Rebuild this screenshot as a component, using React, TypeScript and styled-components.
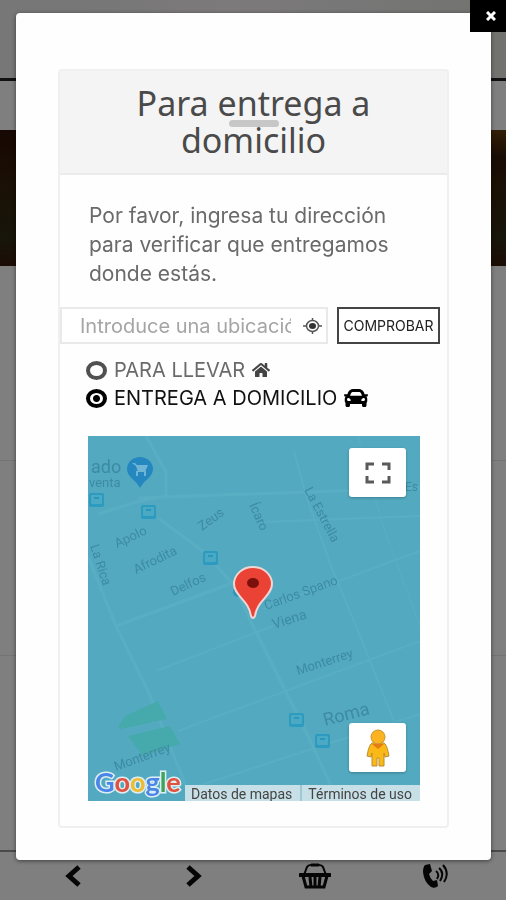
import React, { useState } from "react";
import styled, { createGlobalStyle } from "styled-components";
import { FaHome, FaCar } from "react-icons/fa";

const GlobalStyle = createGlobalStyle`
  *, *::before, *::after { box-sizing: border-box; }
  body { margin: 0; background: #7f7f7f; font-family: Inter, "Liberation Sans", sans-serif; }
  button, input { font-family: inherit; }
`;

const Page = styled.div`
  display: flex;
  flex-direction: column;
  min-height: 100vh;
`;

const PageHeader = styled.header`
  height: 81px;
  border-bottom: 3px solid #111;
  background: linear-gradient(90deg, #777 0 18%, #7d7a7b 45%, #777 70%, #72736f);
`;

const Hero = styled.div`
  height: 136px;
  margin-top: 49px;
  background:
    linear-gradient(180deg, rgba(62, 42, 8, 0.7), transparent 20%) right / 15px 100% no-repeat,
    linear-gradient(180deg, #170803, #1b1004 40%, #17150a 80%, #1c0d05);
`;

const PageSection = styled.section`
  height: 195px;
  border-bottom: 1px solid #747474;
`;

const BottomNav = styled.nav`
  position: fixed;
  inset: auto 0 0 0;
  display: grid;
  grid-template-columns: 3fr 2fr 3fr 2fr;
  height: 50px;
  padding-right: 22px;
  border-top: 2px solid #4a4a4a;
  background: #7f7f7f;
`;

const NavButton = styled.button`
  display: flex;
  align-items: center;
  justify-content: center;
  padding: 0;
  border: 0;
  background: none;
  color: #060606;
`;

const Overlay = styled.div`
  position: fixed;
  inset: 0;
  padding: 13px 15px 40px 16px;
`;

const Dialog = styled.div`
  height: 100%;
  padding: 56px 42px 0;
  border-radius: 4px;
  background: #fefefe;
  box-shadow: 0 1px 4px rgba(0, 0, 0, 0.5);
`;

const CloseButton = styled.button`
  position: absolute;
  top: 0;
  right: 0;
  display: flex;
  align-items: center;
  justify-content: center;
  width: 36px;
  height: 32px;
  padding: 0 0 0 6px;
  border: 0;
  background: #000;
  color: #fff;
`;

const Card = styled.section`
  padding-bottom: 25px;
  border: 2px solid #f0f0f0;
  border-radius: 4px;
`;

const CardHeader = styled.header`
  position: relative;
  padding: 14px 60px;
  border-bottom: 2px solid #ebebeb;
  background: #f4f4f4;
`;

const Title = styled.h1`
  margin: 0;
  color: #4a4a4a;
  font: 400 34px/37px "Noto Sans", sans-serif;
  text-align: center;
`;

const TitleRule = styled.span`
  position: absolute;
  top: 49px;
  left: calc(50% - 25px);
  width: 50px;
  height: 7px;
  border-radius: 4px;
  background: rgba(180, 180, 180, 0.7);
`;

const Intro = styled.p`
  margin: 0;
  padding: 26px 28px 19px 29px;
  color: #6a6a6a;
  font-size: 21px;
  line-height: 29px;
`;

const SearchForm = styled.form`
  display: flex;
  align-items: center;
  gap: 9px;
  padding-right: 7px;
`;

const AddressField = styled.label`
  display: flex;
  flex: 1;
  align-items: center;
  gap: 12px;
  min-width: 0;
  height: 37px;
  padding: 0 4px 0 18px;
  border: 2px solid #e9e9e9;
  background: #fff;
  color: #555;
`;

const AddressInput = styled.input`
  flex: 1;
  min-width: 0;
  padding: 0;
  border: 0;
  outline: 0;
  background: none;
  color: #444;
  font-size: 20px;
  &::placeholder { color: #a5a5a5; opacity: 1; }
`;

const CheckButton = styled.button`
  width: 103px;
  height: 37px;
  padding: 0;
  border: 2px solid #444;
  background: #fff;
  color: #222;
  font-size: 14px;
`;

const Options = styled.fieldset`
  margin: 0;
  padding: 12px 26px 24px;
  border: 0;
`;

const Option = styled.label<{ $active: boolean }>`
  display: flex;
  align-items: center;
  gap: 7px;
  height: 28px;
  color: ${(p) => (p.$active ? "#111" : "#6a6a6a")};
  font-size: 20px;
  line-height: 28px;
  svg { flex: none; color: ${(p) => (p.$active ? "#000" : "#444")}; }
`;

const Radio = styled.input`
  appearance: none;
  flex: none;
  width: 21px;
  height: 19px;
  margin: 0;
  border: 4px solid #505050;
  border-radius: 50%;
  &:checked {
    border-color: #000;
    background: radial-gradient(circle, #000 0 3px, #fff 4px);
  }
`;

const MapFrame = styled.div`
  position: relative;
  height: 365px;
  margin: 0 27px 0 28px;
  overflow: hidden;
  background: #53aac0;
`;

const MapCanvas = styled.svg`
  display: block;
  width: 100%;
  height: 100%;
`;

const MapButton = styled.button<{ $edge: "top" | "bottom" }>`
  position: absolute;
  right: 14px;
  ${(p) => (p.$edge === "top" ? "top: 12px;" : "bottom: 29px;")}
  display: flex;
  align-items: center;
  justify-content: center;
  width: 57px;
  height: 49px;
  padding: 0;
  border: 0;
  border-radius: 3px;
  background: #fff;
  box-shadow: 0 1px 3px rgba(0, 0, 0, 0.25);
`;

const MapCredits = styled.div`
  position: absolute;
  right: 0;
  bottom: 0;
  display: flex;
  height: 16px;
  background: #c7dfe6;
  font: 400 14px/18px Roboto, sans-serif;
`;

const CreditLink = styled.a`
  padding: 0 8px 0 6px;
  color: #444;
  text-decoration: none;
  white-space: nowrap;
  & + & { border-left: 2px solid #a0c8d4; }
`;

const streetLabels = [
  { text: "ado", x: 3, y: 37, angle: 0, size: 18 },
  { text: "venta", x: 1, y: 51, angle: 0, size: 13 },
  { text: "Apolo", x: 29, y: 112, angle: -25, size: 13 },
  { text: "Zeus", x: 114, y: 95, angle: -36, size: 13 },
  { text: "Afrodita", x: 48, y: 138, angle: -26, size: 13 },
  { text: "Delfos", x: 85, y: 160, angle: -25, size: 13 },
  { text: "Ícaro", x: 161, y: 69, angle: 66, size: 13 },
  { text: "La Rica", x: 2, y: 110, angle: 72, size: 13 },
  { text: "La Estrella", x: 216, y: 54, angle: 62, size: 13 },
  { text: "Carlos Spano", x: 178, y: 174, angle: -20, size: 13 },
  { text: "Viena", x: 186, y: 193, angle: -18, size: 14 },
  { text: "Monterrey", x: 210, y: 239, angle: -18, size: 13 },
  { text: "Monterrey", x: 28, y: 335, angle: -20, size: 13 },
  { text: "Roma", x: 237, y: 290, angle: -15, size: 18 },
  { text: "Es", x: 317, y: 55, angle: 0, size: 12 },
];

const transitStops = [[1, 57], [53, 69], [115, 115], [201, 277], [227, 298]];

function DeliveryMap() {
  return (
    <MapCanvas viewBox="0 0 332 365" preserveAspectRatio="xMidYMid slice" role="img" aria-label="Mapa">
      <g fill="none" stroke="#59aec3" strokeWidth="3">
        <path d="M58 0 L78 36 L78 60 M50 62 L332 52 M78 60 L48 66 L10 78 M70 82 L115 115 L146 149 L165 190 L220 300 L250 365" />
        <path d="M28 190 L150 145 M0 120 L28 190 L60 255 L82 310 L104 365" />
        <path d="M206 15 L218 60 L243 130 L268 190 L300 270 L320 320" strokeWidth="2" />
        <path d="M175 86 L332 80 M175 173 L332 115 M68 235 L185 190 M90 295 L332 205 M110 350 L332 278" strokeWidth="2" />
        <path d="M270 0 L295 90 L332 190" strokeWidth="1" />
      </g>
      <g fill="#46a9ac">
        <path d="M30 291 L37 280 L70 265 L79 283 L33 293 Z" />
        <path d="M40 300 L82 290 L92 308 L55 320 Z" />
      </g>
      <circle cx="150" cy="156" r="5" fill="#2797bd" />
      {transitStops.map(([x, y]) => (
        <g key={`${x}-${y}`}>
          <rect x={x} y={y} width="15" height="14" rx="2" fill="#2d9abf" />
          <rect x={x + 2} y={y + 2} width="11" height="9" rx="1" fill="#4ca9c3" />
          <path d={`M${x + 5} ${y + 5}h5`} stroke="#2797bd" strokeWidth="2" />
        </g>
      ))}
      <g fill="#3d8ba2" fontFamily="Roboto, sans-serif">
        {streetLabels.map((l) => (
          <text key={`${l.text}-${l.x}`} fontSize={l.size} transform={`translate(${l.x} ${l.y}) rotate(${l.angle})`}>
            {l.text}
          </text>
        ))}
      </g>
      <path d="M52 21a13 12 0 0 1 13 12c0 8-8 10-13 19c-5-9-13-11-13-19a13 12 0 0 1 13-12Z" fill="#2587bf" />
      <path d="M44 27h3l2 2h11l-3 7h-7l-2-6Z" fill="#6fb6d4" />
      <path d="M49 35v5M57 35v5" stroke="#6fb6d4" strokeWidth="2" />
      <path d="M165 131c11 0 19 8 19 17c0 12-15 16-17 32q-2 4-4 0c-2-16-17-20-17-32c0-9 8-17 19-17Z" fill="#ea4335" stroke="#f0d5d5" strokeWidth="2" />
      <ellipse cx="165" cy="147" rx="6" ry="5" fill="#7c100c" />
      <text x="7" y="356" fontFamily="Lato, sans-serif" fontSize="27" fontWeight="700" stroke="#dceef2" strokeWidth="3" paintOrder="stroke">
        <tspan fill="#4a86e8">G</tspan><tspan fill="#e2503f">o</tspan><tspan fill="#eebb35">o</tspan><tspan fill="#4a86e8">g</tspan><tspan fill="#3fa35a">l</tspan><tspan fill="#e2503f">e</tspan>
      </text>
    </MapCanvas>
  );
}

function LocateIcon() {
  return (
    <svg width="19" height="16" viewBox="0 0 19 16" fill="none" stroke="#555" aria-hidden="true">
      <ellipse cx="9.5" cy="8" rx="6" ry="5.5" strokeWidth="1.5" />
      <ellipse cx="9.5" cy="8" rx="3.5" ry="3" fill="#333" stroke="none" />
      <path d="M9.5 0v3M9.5 13v3M0 8h4M15 8h4" strokeWidth="1.5" />
    </svg>
  );
}

function FullscreenIcon() {
  return (
    <svg width="26" height="22" viewBox="0 0 26 22" fill="none" stroke="#5a5a5a" strokeWidth="3" aria-hidden="true">
      <path d="M2 8V2h7M17 2h7v6M24 14v6h-7M9 20H2v-6" />
    </svg>
  );
}

function StreetPersonIcon() {
  return (
    <svg width="26" height="38" viewBox="0 0 26 38" aria-hidden="true">
      <path d="M7 14h12c3 2 4 8 5 13l-4 1l-1-4v13h-5v-8h-2v8H7V24l-1 4l-4-1c1-5 2-11 5-13Z" fill="#fbb917" stroke="#b98d35" />
      <path d="M7 15h12l-6 5Z" fill="#e67b12" />
      <circle cx="13" cy="8" r="7" fill="#fbb322" stroke="#c79330" />
    </svg>
  );
}

function ChevronIcon({ forward = false }: { forward?: boolean }) {
  return (
    <svg width="18" height="24" viewBox="0 0 18 24" fill="none" stroke="currentColor" strokeWidth="5" aria-hidden="true">
      <path d={forward ? "M3 3L13 12L3 21" : "M15 3L5 12L15 21"} />
    </svg>
  );
}

function BasketIcon() {
  return (
    <svg width="32" height="26" viewBox="0 0 32 26" fill="none" stroke="currentColor" aria-hidden="true">
      <path d="M5 12L8 4Q9 2 12 2h8Q23 2 24 4l3 8" strokeWidth="2" />
      <path d="M12 2h8" strokeWidth="3" />
      <path d="M1 12h30" strokeWidth="4" strokeLinecap="round" />
      <path d="M4 13l3 11h18l3-11M11 14l1 10M16 14v10M21 14l-1 10" strokeWidth="3" />
    </svg>
  );
}

function CallIcon() {
  return (
    <svg width="27" height="26" viewBox="0 0 27 26" aria-hidden="true">
      <path d="M3 2L8 1L10 8L7 11Q8 15 11 18L15 17L16 23Q13 26 9 24Q2 19 1 9Q1 4 3 2Z" fill="currentColor" />
      <path d="M14 8Q18 11 15 16M17 5Q23 10 18 18M21 2Q28 10 22 19" fill="none" stroke="currentColor" strokeWidth="2" />
    </svg>
  );
}

function CloseIcon() {
  return (
    <svg width="10" height="10" viewBox="0 0 10 10" stroke="currentColor" strokeWidth="3" aria-hidden="true">
      <path d="M1 1L9 9M9 1L1 9" />
    </svg>
  );
}

export default function App() {
  const [mode, setMode] = useState("domicilio");
  return (
    <>
      <GlobalStyle />
      <Page>
        <PageHeader />
        <Hero />
        <PageSection />
        <PageSection />
      </Page>
      <BottomNav>
        <NavButton aria-label="Anterior"><ChevronIcon /></NavButton>
        <NavButton aria-label="Siguiente"><ChevronIcon forward /></NavButton>
        <NavButton aria-label="Cesta"><BasketIcon /></NavButton>
        <NavButton aria-label="Llamar"><CallIcon /></NavButton>
      </BottomNav>
      <Overlay>
        <Dialog role="dialog" aria-labelledby="title">
          <Card>
            <CardHeader>
              <TitleRule />
              <Title id="title">Para entrega a domicilio</Title>
            </CardHeader>
            <Intro>Por favor, ingresa tu dirección para verificar que entregamos donde estás.</Intro>
            <SearchForm onSubmit={(e) => e.preventDefault()}>
              <AddressField>
                <AddressInput placeholder="Introduce una ubicación" aria-label="Ubicación" />
                <LocateIcon />
              </AddressField>
              <CheckButton type="submit">COMPROBAR</CheckButton>
            </SearchForm>
            <Options>
              <Option $active={mode === "llevar"}>
                <Radio type="radio" name="mode" checked={mode === "llevar"} onChange={() => setMode("llevar")} />
                PARA LLEVAR <FaHome size={18} />
              </Option>
              <Option $active={mode === "domicilio"}>
                <Radio type="radio" name="mode" checked={mode === "domicilio"} onChange={() => setMode("domicilio")} />
                ENTREGA A DOMICILIO <FaCar size={24} />
              </Option>
            </Options>
            <MapFrame>
              <DeliveryMap />
              <MapButton $edge="top" aria-label="Pantalla completa"><FullscreenIcon /></MapButton>
              <MapButton $edge="bottom" aria-label="Street View"><StreetPersonIcon /></MapButton>
              <MapCredits>
                <CreditLink href="#datos">Datos de mapas</CreditLink>
                <CreditLink href="#terminos">Términos de uso</CreditLink>
              </MapCredits>
            </MapFrame>
          </Card>
        </Dialog>
        <CloseButton aria-label="Cerrar"><CloseIcon /></CloseButton>
      </Overlay>
    </>
  );
}
